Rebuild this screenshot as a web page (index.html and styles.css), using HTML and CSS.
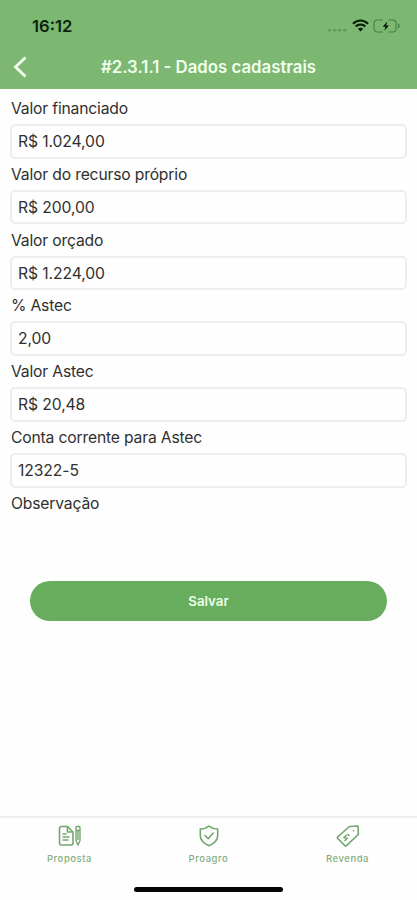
FILE: index.html
```
<!DOCTYPE html>
<html lang="pt-BR">
<head>
<meta charset="utf-8">
<meta name="viewport" content="width=device-width, initial-scale=1">
<title>Dados cadastrais</title>
<link rel="stylesheet" href="styles.css">
</head>
<body>
<div class="screen">
  <header class="header">
    <div class="status">
      <span class="time">16:12</span>
      <div class="indicators">
        <svg class="signal" width="20" height="4" viewBox="0 0 20 4" fill="#609b59"><rect x="0" y="1" width="3.4" height="2.4" rx=".8"/><rect x="5" y="1" width="3.4" height="2.4" rx=".8"/><rect x="10" y="1" width="3.4" height="2.4" rx=".8"/><rect x="15" y="1" width="3.4" height="2.4" rx=".8"/></svg>
        <svg class="wifi" width="17" height="13" viewBox="0 0 17 13" fill="none" stroke="#071b07" stroke-width="2.2"><path d="M1 4.7C5.2.4 11.8.4 16 4.7"/><path d="M3.7 7.6c2.7-2.8 6.9-2.8 9.6 0"/><path d="M8.5 12.5 5.9 9.8c1.500-1.300 3.700-1.300 5.200 0z" fill="#071b07" stroke="none"/></svg>
        <svg class="battery" width="27" height="14" viewBox="0 0 27 14" fill="none" stroke="#438040" stroke-width="1.1"><path d="M10 1H4.2A3.2 3.2 0 0 0 1 4.2v5.6A3.2 3.2 0 0 0 4.2 13H10M15.500 1h4.300A3.200 3.200 0 0 1 23 4.200v5.600a3.200 3.200 0 0 1-3.200 3.200h-4.300"/><path d="M25 5c1.200.6 1.200 3.400 0 4" stroke-width="1.500"/><path d="M14.200 2.600 9.600 7.800h2.700l-.9 3.900L16 6.400h-2.700z" fill="#071b07" stroke="none"/></svg>
      </div>
    </div>
    <div class="titlebar">
      <svg class="back" width="14" height="22" viewBox="0 0 14 22" fill="none" stroke="#f7fff5" stroke-width="2.800"><path d="M12.500 1.500 2.500 11l10 9.500"/></svg>
      <h1 class="title">#2.3.1.1 - Dados cadastrais</h1>
    </div>
  </header>
  <main class="form">
    <div class="field"><div class="label">Valor financiado</div><div class="input">R$ 1.024,00</div></div>
    <div class="field"><div class="label">Valor do recurso próprio</div><div class="input">R$ 200,00</div></div>
    <div class="field"><div class="label">Valor orçado</div><div class="input">R$ 1.224,00</div></div>
    <div class="field"><div class="label">% Astec</div><div class="input">2,00</div></div>
    <div class="field"><div class="label">Valor Astec</div><div class="input">R$ 20,48</div></div>
    <div class="field"><div class="label">Conta corrente para Astec</div><div class="input">12322-5</div></div>
    <div class="field"><div class="label">Observação</div></div>
    <button class="save">Salvar</button>
  </main>
  <nav class="tabs">
    <div class="tab">
      <svg width="24" height="22" viewBox="0 0 24 22" fill="none" stroke="#72a76d" stroke-width="1.600" stroke-linejoin="round"><path d="M9.500 1.500H3.500a2 2 0 0 0-2 2v14.500a2 2 0 0 0 2 2h9.500a2 2 0 0 0 2-2V7z"/><path d="M9.500 1.500V7H15M4.500 9h4M4.500 12h7M4.500 15h6"/><path d="M18 2.500q0-1 1-1h2q1 0 1 1v13L20 20l-2-4.500zM18 5.500h4M20 6v9" stroke-width="1.400"/></svg>
      <span>Proposta</span>
    </div>
    <div class="tab">
      <svg width="24" height="22" viewBox="0 0 24 22" fill="none" stroke="#72a76d" stroke-width="1.600" stroke-linejoin="round" stroke-linecap="round"><path d="M12 1c2.500 2 5.300 3 8.700 3v6.500c0 5-3.400 8-8.700 10.200-5.300-2.200-8.700-5.200-8.700-10.200V4C6.700 4 9.500 3 12 1z"/><path d="m8 10.500 3.200 3.200 5-5.700"/></svg>
      <span>Proagro</span>
    </div>
    <div class="tab">
      <svg width="24" height="22" viewBox="0 0 24 22" fill="none" stroke="#72a76d" stroke-width="1.600" stroke-linejoin="round" stroke-linecap="round"><path d="M13.500 1.500 22 1l.3 8.500L10.500 20.600q-.8.700-1.600 0L1.700 13.500q-.8-.8 0-1.600z"/><path d="M10.300 10.200 8 12.500l3.200.8L9 15.500M12 9.500l1 1M17.500 5.700v.1"/></svg>
      <span>Revenda</span>
    </div>
  </nav>
  <div class="home"></div>
</div>
</body>
</html>
```
FILE: styles.css
```
* { box-sizing: border-box; }
body { margin: 0; background: #fefefe; font-family: Inter, "Liberation Sans", sans-serif; color: #303030; }
.screen { width: 417px; height: 900px; display: flex; flex-direction: column; overflow: hidden; }
.header { height: 88.5px; flex: none; background: #7cb872; }
.status { height: 46px; padding: 5px 17px 0 32px; display: flex; align-items: center; justify-content: space-between; }
.time { font-size: 16.600px; font-weight: 600; color: #0b230b; }
.indicators { display: flex; align-items: center; }
.signal { margin: 8px 4px 0 0; }
.wifi { margin-right: 4px; }
.titlebar { height: 42px; display: flex; align-items: center; padding-left: 13px; }
.title { flex: 1; margin: 0 27px 0 0; text-align: center; font-size: 16.800px; font-weight: 600; color: #f0ffec; white-space: nowrap; }
.form { flex: 1; padding: 3.500px 10px 0; display: flex; flex-direction: column; }
.field { height: 65.830px; flex: none; }
.label { height: 32px; line-height: 34px; padding-left: 1px; font-size: 15.700px; letter-spacing: -.18px; white-space: nowrap; }
.input { height: 34.500px; border: 2px solid #eceeee; border-radius: 5px; padding-left: 6px; line-height: 31px; font-size: 15.700px; letter-spacing: -.1px; }
.save { flex: none; width: 357px; height: 40px; margin: 28px 0 0 20px; border: 0; padding: 0; border-radius: 20px; background: #68ad5d; color: #eaffe6; font: 600 13.300px Inter, sans-serif; }
.tabs { height: 66px; flex: none; display: grid; grid-template-columns: repeat(3, 1fr); border-top: 2px solid #eceeee; }
.tab { display: flex; flex-direction: column; align-items: center; padding-top: 7px; font-size: 9.500px; font-weight: 500; color: #84ae80; }
.tab span { margin-top: 5px; line-height: 14px; letter-spacing: .55px; }
.home { flex: none; width: 149px; height: 5px; margin: 5px auto 8px; border-radius: 3px; background: #050505; }
```
